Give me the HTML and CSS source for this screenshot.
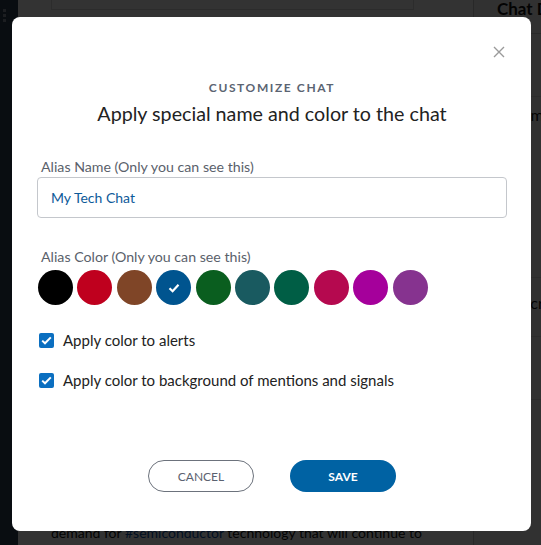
FILE: index.html
```html
<!DOCTYPE html>
<html lang="en">

<head>
    <meta charset="UTF-8">
    <meta name="viewport" content="width=device-width, initial-scale=1.0">
    <title>Customize Chat</title>
    <link rel="stylesheet" href="styles.css">
</head>

<body>
    <!-- page behind the dialog -->
    <div class="app">
        <aside class="rail">
            <span class="dot"></span>
            <span class="dot"></span>
            <span class="dot"></span>
        </aside>
        <main class="feed">
            <div class="post-card"></div>
            <p class="post-text">demand for <a href="#">#semiconductor</a> technology that will continue to
                evolve higher and higher. With that in mind, stocks could be</p>
        </main>
        <aside class="side">
            <h2 class="side-title">Chat Details</h2>
            <div class="side-row">Auto</div>
            <div class="side-row tall">Information</div>
            <div class="side-row big">Subscribers</div>
            <div class="side-row">(4)</div>
        </aside>
    </div>

    <div class="overlay"></div>

    <section class="modal">
        <button class="close" aria-label="Close">
            <svg width="12" height="12" viewBox="0 0 12 12">
                <path d="M1 1L11 11M11 1L1 11" stroke="#9a9a9a" stroke-width="1.4" fill="none" />
            </svg>
        </button>

        <h4 class="eyebrow">CUSTOMIZE CHAT</h4>
        <h3 class="title">Apply special name and color to the chat</h3>

        <label class="field-label" for="alias">Alias Name (Only you can see this)</label>
        <input class="alias-input" id="alias" type="text" value="My Tech Chat">

        <div class="field-label color-label">Alias Color (Only you can see this)</div>
        <div class="swatches">
            <span class="swatch" style="background:#000000"></span>
            <span class="swatch" style="background:#bf001e"></span>
            <span class="swatch" style="background:#7f4527"></span>
            <span class="swatch selected" style="background:#00548f">
                <svg width="12" height="10" viewBox="0 0 12 10">
                    <path d="M1.5 5.2L4.6 8.2L10.5 1.8" stroke="#fff" stroke-width="2.2" fill="none" />
                </svg>
            </span>
            <span class="swatch" style="background:#0a5e1f"></span>
            <span class="swatch" style="background:#195a60"></span>
            <span class="swatch" style="background:#005e45"></span>
            <span class="swatch" style="background:#b5094f"></span>
            <span class="swatch" style="background:#a5009b"></span>
            <span class="swatch" style="background:#86338f"></span>
        </div>

        <div class="check-row first">
            <span class="box">
                <svg width="11" height="9" viewBox="0 0 11 9">
                    <path d="M1.2 4.6L4 7.3L9.8 1.4" stroke="#fff" stroke-width="2" fill="none" />
                </svg>
            </span>
            <span>Apply color to alerts</span>
        </div>
        <div class="check-row">
            <span class="box">
                <svg width="11" height="9" viewBox="0 0 11 9">
                    <path d="M1.2 4.6L4 7.3L9.8 1.4" stroke="#fff" stroke-width="2" fill="none" />
                </svg>
            </span>
            <span>Apply color to background of mentions and signals</span>
        </div>

        <div class="actions">
            <button class="btn btn-cancel">CANCEL</button>
            <button class="btn btn-save">SAVE</button>
        </div>
    </section>
</body>

</html>
```

FILE: styles.css
```css
body {
    margin: 0;
    width: 541px;
    height: 545px;
    overflow: hidden;
    font-family: Lato, "Open Sans", sans-serif;
    color: #222;
}

/* background page */
.app {
    display: flex;
    height: 545px;
}

.rail {
    flex: 0 0 18px;
    background: #2f4257;
    display: flex;
    flex-direction: column;
    align-items: flex-start;
    gap: 2px;
    padding: 9px 0 0 3px;
    box-sizing: border-box;
}

.dot {
    width: 3px;
    height: 3px;
    background: #8a97a6;
}

.feed {
    flex: 0 0 455px;
    background: #fff;
}

.post-card {
    margin-left: 33px;
    width: 361px;
    height: 9px;
    border: 1px solid #ddd;
    border-top: none;
    background: #fdfdfd;
}

.post-text {
    margin: 512px 0 0 33px;
    font-size: 14px;
    line-height: 22px;
    width: 390px;
    color: #111;
}

.post-text a {
    color: #0a4fa8;
    text-decoration: none;
}

.side {
    flex: 1;
    min-width: 0;
    overflow: hidden;
    background: #f6f6f6;
    border-left: 1px solid #c9c9c9;
    font-size: 16px;
    color: #111;
}

.side-title {
    margin: 0;
    font-size: 17px;
    line-height: 18px;
    height: 34px;
    box-sizing: border-box;
    white-space: nowrap;
    border-bottom: 1px solid #ccc;
    padding-left: 23px;
}

.side-row {
    height: 62px;
    line-height: 36px;
    white-space: nowrap;
    border-bottom: 1px solid #ddd;
    padding-left: 23px;
}

.side-row.tall {
    height: 180px;
}

.side-row.big {
    height: 58px;
    line-height: 50px;
}

.overlay {
    position: fixed;
    inset: 0;
    background: rgba(0, 0, 0, 0.8);
}

/* dialog */
.modal {
    position: fixed;
    left: 12px;
    top: 17px;
    width: 519px;
    height: 514px;
    box-sizing: border-box;
    padding: 63px 24px 0 25px;
    background: #fff;
    border-radius: 8px;
}

.close {
    position: absolute;
    top: 29px;
    right: 26px;
    border: none;
    background: none;
    padding: 0;
    width: 12px;
    height: 12px;
    cursor: pointer;
}

.close svg {
    display: block;
}

.eyebrow {
    margin: 0;
    text-align: center;
    font-size: 12px;
    line-height: 16px;
    letter-spacing: 1.6px;
    font-weight: 700;
    color: #5b6472;
}

.title {
    margin: 5px 0 0;
    text-align: center;
    font-size: 19.7px;
    line-height: 26px;
    font-weight: 400;
    color: #222;
}

.field-label {
    display: block;
    margin: 31px 0 1px 4px;
    font-size: 14.2px;
    line-height: 18px;
    color: #5a616b;
}

.alias-input {
    display: block;
    width: 100%;
    height: 41px;
    box-sizing: border-box;
    border: 1px solid #c4c7cc;
    border-radius: 4px;
    padding: 0 13px;
    font-family: inherit;
    font-size: 14px;
    color: #0d5a99;
    outline: none;
}

.color-label {
    margin-top: 30px;
    margin-bottom: 4px;
}

.swatches {
    display: flex;
    gap: 4.4px;
    margin-left: 1px;
}

.swatch {
    width: 35px;
    height: 35px;
    border-radius: 50%;
    display: flex;
    align-items: center;
    justify-content: center;
}

.check-row {
    display: flex;
    align-items: center;
    gap: 9px;
    margin: 20px 0 0 2px;
    font-size: 15px;
    line-height: 20px;
    color: #222;
}

.check-row.first {
    margin-top: 25px;
}

.box {
    width: 15px;
    height: 15px;
    border-radius: 2px;
    background: #0b6fc0;
    display: flex;
    align-items: center;
    justify-content: center;
}

.actions {
    display: flex;
    justify-content: center;
    gap: 36px;
    margin-top: 70px;
}

.btn {
    width: 106px;
    height: 32px;
    border-radius: 16px;
    font-family: inherit;
    font-size: 12px;
    cursor: pointer;
}

.btn-cancel {
    background: #fff;
    border: 1px solid #6c727c;
    color: #5b6270;
}

.btn-save {
    background: #0062a3;
    border: none;
    color: #fff;
    font-weight: 700;
}
```
